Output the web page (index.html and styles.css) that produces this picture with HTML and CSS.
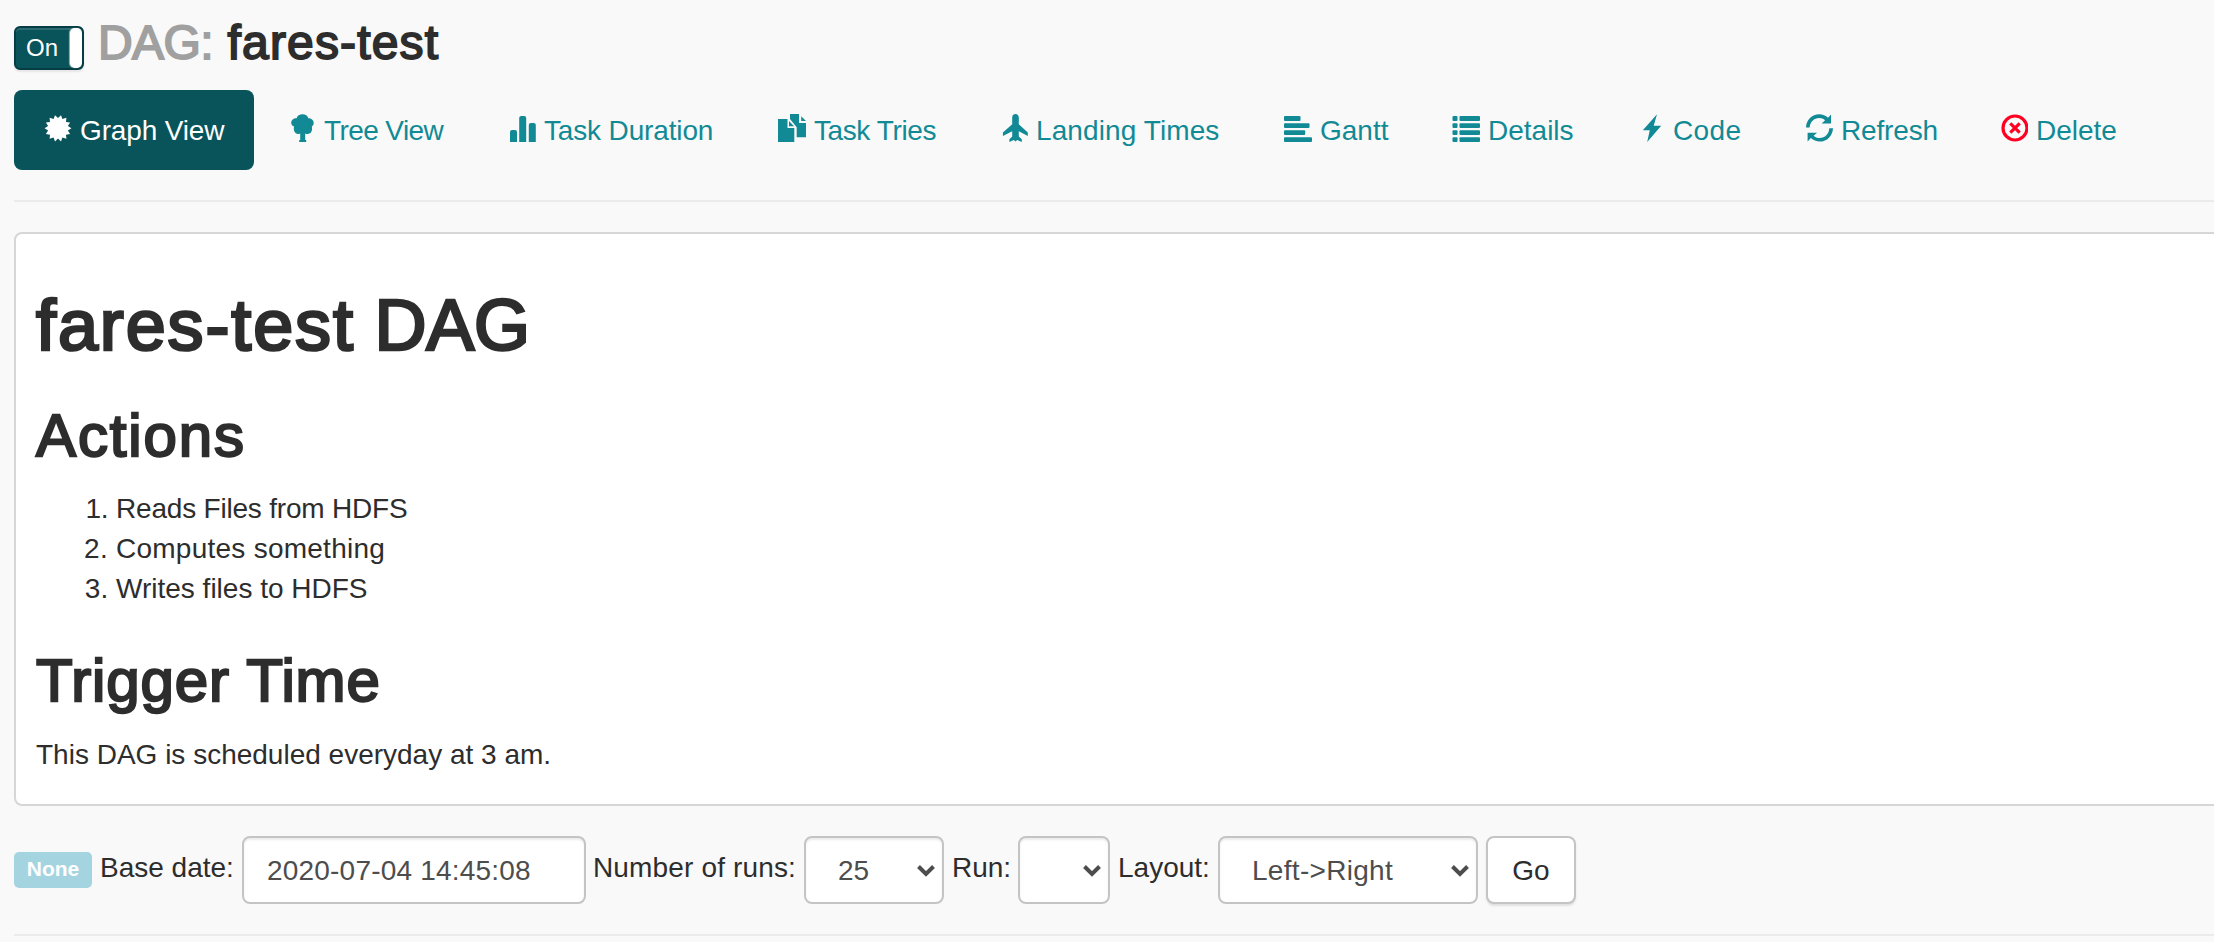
FILE: index.html
```html
<!DOCTYPE html>
<html lang="en">
<head>
<meta charset="utf-8">
<title>DAG: fares-test</title>
<link rel="stylesheet" href="styles.css">
</head>
<body>
<header class="title-row">
  <div class="toggle"><span class="toggle-label">On</span><span class="toggle-handle"></span></div>
  <h3 class="dag-title"><span class="muted">DAG:</span> <span>fares-test</span></h3>
</header>
<nav class="pills">
  <a class="pill active"><svg class="icon" viewBox="0 0 28 28"><path d="M14 4.100L17 1.200L18.400 5.100L22.400 3.800L22 7.900L26.100 8.500L23.900 12L27.400 14.300L23.900 16.600L26.100 20.100L22 20.700L22.400 24.800L18.400 23.500L17 27.400L14 24.500L11 27.400L9.600 23.500L5.600 24.800L6 20.700L1.900 20.100L4.100 16.600L.6 14.300L4.100 12L1.900 8.500L6 7.900L5.600 3.800L9.600 5.100L11 1.200Z"/></svg><span>Graph View</span></a>
  <a class="pill t-tree"><svg class="icon" viewBox="0 0 28 28"><path d="M14.500.3c3 0 5.200 1.600 5.800 4 2.600-.2 5.200 1.600 5.400 4.200.1 1.900-.7 3.200-1.900 3.900 1 3.800-.7 7.500-4.100 7.500-.9 0-1.800-.1-2.500-.5v6.600h1V28h-7v-2h1v-6.600c-.7.400-1.400.5-2.100.5-3.300 0-5-3.400-4-7.300C4.300 11.900 3.200 10.500 3.200 8.700c0-2.700 2.700-4.700 5.400-4.400C9.200 1.900 11.500.3 14.500.3Z"/></svg><span>Tree View</span></a>
  <a class="pill t-duration"><svg class="icon" viewBox="0 0 28 28"><path d="M2 28V18q0-2 2-2h3q2 0 2 2v10ZM11.200 28V4q0-2 2-2h3q2 0 2 2v24ZM20.800 28V11q0-2 2-2h3q2 0 2 2v17Z"/></svg><span>Task Duration</span></a>
  <a class="pill t-tries"><svg class="icon" viewBox="0 0 28 28"><path d="M0 5h9.500v9h6.800v14H0ZM11 7l5 5.200h-5ZM12 0h9v9h7v14.200H18.700v-10L12 5ZM23.200 2.200L28 7.100h-4.800Z"/></svg><span>Task Tries</span></a>
  <a class="pill t-landing"><svg class="icon" viewBox="0 0 28 28"><path d="M15.500 0c2 0 3.300 1.500 3.300 3.500v6.700l9 8.300v3.400l-9-4.600v5.200l3 2.700V28l-4.600-2-1.700 1.500L13.800 26 9.400 28v-2.800l2.800-2.700v-5.200L2.900 21.900v-3.400l9.300-8.300V3.500C12.200 1.500 13.500 0 15.500 0Z"/></svg><span>Landing Times</span></a>
  <a class="pill"><svg class="icon" viewBox="0 0 28 28"><rect y="2" width="16.500" height="5" rx="1"/><rect y="9.200" width="25.500" height="4.800" rx="1"/><rect y="16.200" width="21.200" height="4.800" rx="1"/><rect y="23.200" width="28" height="4.800" rx="1"/></svg><span>Gantt</span></a>
  <a class="pill"><svg class="icon" viewBox="0 0 28 28"><rect x=".5" y="2" width="5" height="5" rx="1"/><rect x=".5" y="9.200" width="5" height="4.800" rx="1"/><rect x=".5" y="16.200" width="5" height="4.800" rx="1"/><rect x=".5" y="23.200" width="5" height="4.800" rx="1"/><rect x="7.500" y="2" width="20.500" height="5" rx="1"/><rect x="7.500" y="9.200" width="20.500" height="4.800" rx="1"/><rect x="7.500" y="16.200" width="20.500" height="4.800" rx="1"/><rect x="7.500" y="23.200" width="20.500" height="4.800" rx="1"/></svg><span>Details</span></a>
  <a class="pill t-code"><svg class="icon" viewBox="0 0 28 28"><path d="M20 .2L5.800 16.300h7L10.200 28 24.200 11.800h-7.500Z"/></svg><span>Code</span></a>
  <a class="pill t-refresh"><svg class="icon" viewBox="0 0 28 28"><path d="M1 13.500C1.200 6 7 .3 14.200.3c3.500 0 6.400 1.200 8.900 3.400L26 .6V9.500h-9.300l3.400-3.300c-1.700-1.500-3.600-2.300-6-2.300-5 0-9.200 4-9.400 9.600ZM28 14.200C27.700 21.700 22 27.600 14.800 27.600c-3.400 0-6.500-1.300-8.900-3.500L2.600 27.500V18.700h9.500L8.600 21.700c1.700 1.500 3.800 2.300 6.100 2.300 5.200 0 9.400-4.100 9.600-9.800Z"/></svg><span>Refresh</span></a>
  <a class="pill"><svg class="icon danger" viewBox="0 0 28 28"><circle cx="15" cy="14" r="12"/><path d="M10.300 9.400L19.700 18.600M19.700 9.400L10.300 18.600"/></svg><span>Delete</span></a>
</nav>
<hr class="rule">
<section class="doc">
  <h1><span class="name">fares-test</span> DAG</h1>
  <h2 class="actions">Actions</h2>
  <ol><li class="tight">Reads Files from HDFS</li><li class="loose">Computes something</li><li>Writes files to HDFS</li></ol>
  <h2 class="trigger">Trigger Time</h2>
  <p>This DAG is scheduled everyday at 3 am.</p>
</section>
<form class="controls">
  <span class="badge">None</span>
  <label class="l-date">Base date:</label>
  <div class="field f-date">2020-07-04 14:45:08</div>
  <label class="l-num">Number of runs:</label>
  <div class="field select f-num"><span>25</span><svg class="chevron" viewBox="0 0 18 14"><path d="M1.500 2.500L9 10L16.500 2.500"/></svg></div>
  <label class="l-run">Run:</label>
  <div class="field select f-run"><span></span><svg class="chevron" viewBox="0 0 18 14"><path d="M1.500 2.500L9 10L16.500 2.500"/></svg></div>
  <label class="l-layout">Layout:</label>
  <div class="field select f-layout"><span>Left-&gt;Right</span><svg class="chevron" viewBox="0 0 18 14"><path d="M1.500 2.500L9 10L16.500 2.500"/></svg></div>
  <button class="go" type="button">Go</button>
</form>
<hr class="rule last">
</body>
</html>
```
FILE: styles.css
```css
* { box-sizing: border-box; }
body {
  margin: 0;
  padding: 0 0 0 14px;
  height: 942px;
  overflow: hidden;
  background: #f9f9f9;
  color: #2d2d2d;
  font: 28px/40px "Liberation Sans", Arial, sans-serif;
}
h1, h2, h3, p, ol { margin: 0; }
/* Medium weight: the regular face with a thin outline */
h1, h2, h3 { font-weight: 400; line-height: 1.1; -webkit-text-stroke: .038em currentColor; }

.title-row { display: flex; height: 90px; }
.toggle {
  display: flex;
  justify-content: space-between;
  width: 70px;
  height: 44px;
  margin: 26px 14px 0 0;
  border: 2px solid #053d44;
  border-radius: 6px;
  background: #09535a;
  box-shadow: inset 0 2px 0 #2b6b71, 0 2px 2px rgba(0, 0, 0, .08);
  color: #fff;
  font-size: 24px;
  line-height: 40px;
}
.toggle-label { padding-left: 10px; }
.toggle-handle { width: 12px; height: 40px; border-radius: 5px; background: #fff; box-shadow: -1px 0 1px #9bb5b8; }
.dag-title { padding-top: 17px; font-size: 48px; letter-spacing: .024em; white-space: pre; }
.muted { color: #a0a0a0; letter-spacing: -.012em; }

.pills {
  display: grid;
  grid-template-columns: 240px 216px 266px 218px 280px 164px 181px 164px 191px 210px;
  column-gap: 4px;
  height: 80px;
}
.pill {
  display: flex;
  gap: 8px;
  height: 80px;
  padding: 20px 0 0 30px;
  border-radius: 8px;
  color: #118a95;
  white-space: nowrap;
}
.pill span { padding-top: 1px; }
.pill.active { background: #09535a; color: #fff; letter-spacing: -.15px; }
.t-tree { letter-spacing: -.6px; }
.t-duration, .t-refresh { letter-spacing: -.15px; }
.t-tries { letter-spacing: -.4px; }
.t-landing { letter-spacing: .1px; }
.t-code { letter-spacing: .4px; }
.icon { flex: none; width: 28px; height: 28px; margin-top: 4px; fill: currentColor; }
.icon.danger { fill: none; stroke: #ff0022; stroke-width: 3.200; }

.rule { height: 2px; margin: 30px 0; border: 0; background: #ebebeb; }

.doc {
  height: 574px;
  margin-right: -20px;
  padding: 51px 20px 0;
  border: 2px solid #d6d6d6;
  border-radius: 8px;
  background: #fff;
}
.doc h1 { height: 80px; font-size: 72px; line-height: 80px; letter-spacing: -.004em; }
.doc .name { letter-spacing: .026em; }
.doc h2 { height: 66px; margin-top: 38px; font-size: 60px; line-height: 66px; }
.doc .actions { letter-spacing: .031em; }
.doc .trigger { margin-top: 39px; letter-spacing: .014em; }
.doc ol { margin-top: 20px; padding-left: 80px; }
.tight { letter-spacing: -.2px; }
.loose { letter-spacing: .25px; }
.doc p { margin-top: 21px; }

.controls { display: flex; height: 68px; margin-top: 30px; }
.badge {
  width: 78px;
  height: 36px;
  margin: 16px 8px 0 0;
  border-radius: 5px;
  background: #a5d4e1;
  color: #fff;
  font-size: 21px;
  font-weight: 700;
  line-height: 34px;
  text-align: center;
}
.controls label { flex: none; padding-top: 12px; white-space: nowrap; }
.l-date { width: 142px; }
.l-num { width: 218px; padding-left: 7px; letter-spacing: .15px; }
.l-run { width: 74px; padding-left: 8px; }
.l-layout { width: 108px; padding-left: 8px; }
.field {
  flex: none;
  height: 68px;
  padding: 13px 23px;
  border: 2px solid #c4c4c4;
  border-radius: 8px;
  background: #fff;
  box-shadow: inset 0 2px 2px rgba(0, 0, 0, .075);
  color: #4d4d4d;
}
.f-date { width: 344px; letter-spacing: .2px; }
.select { display: flex; justify-content: space-between; padding: 13px 7px 12px 32px; }
.f-num { width: 140px; }
.f-run { width: 92px; }
.f-layout { width: 260px; letter-spacing: .3px; }
.chevron { width: 18px; height: 14px; margin-top: 13px; fill: none; stroke: #4d4d4d; stroke-width: 4; }
.go {
  width: 90px;
  height: 68px;
  margin-left: 8px;
  padding: 2px 0 0;
  border: 2px solid #c4c4c4;
  border-radius: 8px;
  background: #fff;
  box-shadow: 0 2px 2px rgba(0, 0, 0, .1);
  color: #2d2d2d;
  font: inherit;
}
```
